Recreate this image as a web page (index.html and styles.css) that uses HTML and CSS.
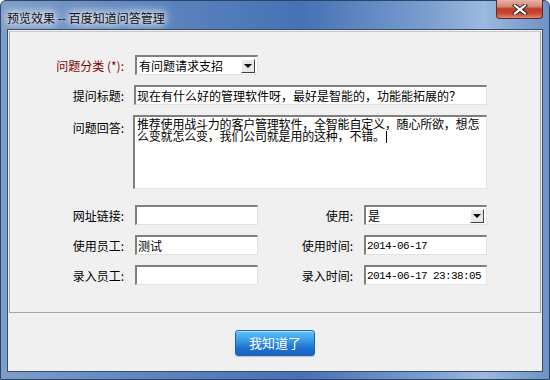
FILE: index.html
```html
<!DOCTYPE html>
<html lang="zh-CN">
<head>
  <meta charset="UTF-8">
  <title>预览效果 -- 百度知道问答管理</title>
  <link rel="stylesheet" href="styles.css">
</head>
<body>

  <div class="window">
    <!-- Barre de titre -->
    <div class="titlebar">
      <span class="title">预览效果 -- 百度知道问答管理</span>
      <div class="close">
        <svg width="16" height="11" viewBox="0 0 16 11">
          <path d="M3 1.5 L13 9.5 M13 1.5 L3 9.5" stroke="#3b2a28" stroke-width="4.2" stroke-linecap="square"/>
          <path d="M3 1.5 L13 9.5 M13 1.5 L3 9.5" stroke="#ffffff" stroke-width="2.2" stroke-linecap="square"/>
        </svg>
      </div>
    </div>

    <div class="client">
      <div class="panel">
        <div class="form">
          <label class="required">问题分类 (*):</label>
          <div class="combo">
            <span>有问题请求支招</span>
            <span class="arrow"></span>
          </div>
          <span></span><span></span>

          <label>提问标题:</label>
          <div class="field wide">现在有什么好的管理软件呀，最好是智能的，功能能拓展的？</div>

          <label class="top">问题回答:</label>
          <div class="field wide memo">推荐使用战斗力的客户管理软件，全智能自定义，随心所欲，想怎么变就怎么变，我们公司就是用的这种，不错。<span class="caret"></span></div>

          <label>网址链接:</label>
          <div class="field"></div>
          <label>使用:</label>
          <div class="combo">
            <span>是</span>
            <span class="arrow"></span>
          </div>

          <label>使用员工:</label>
          <div class="field">测试</div>
          <label>使用时间:</label>
          <div class="field mono">2014-06-17</div>

          <label>录入员工:</label>
          <div class="field"></div>
          <label>录入时间:</label>
          <div class="field mono">2014-06-17 23:38:05</div>
        </div>
      </div>

      <div class="footer">
        <button class="ok">我知道了</button>
      </div>
    </div>
  </div>

</body>
</html>
```

FILE: styles.css
```css
body {
  margin: 0;
  font-family: "Noto Sans CJK SC", "Noto Sans", sans-serif;
  font-size: 12px;
  color: #000;
}

.window {
  width: 550px;
  height: 380px;
  box-sizing: border-box;
  display: flex;
  flex-direction: column;
  border: 1px solid #2c4466;
  border-radius: 6px 6px 0 0;
  background: linear-gradient(to right, #7f9dc9 0%, #5f87c0 25%, #4672b4 55%, #7a9ed0 78%, #9cb9df 88%, #6d92c6 100%);
}

.titlebar {
  height: 28px;
  display: flex;
  align-items: flex-start;
  padding: 0 6px 0 6px;
}

.title {
  margin-top: 8px;
  font-size: 12px;
  color: #111;
  text-shadow: 0 0 6px #fff, 0 0 10px #fff, 0 0 14px #fff;
}

.close {
  margin-left: auto;
  width: 45px;
  height: 18px;
  margin-top: -1px;
  display: flex;
  align-items: center;
  justify-content: center;
  border: 1px solid #5c2b24;
  border-top: none;
  border-radius: 0 0 4px 4px;
  background: linear-gradient(to bottom, #e8b1a6 0%, #d68a7c 35%, #c03a24 50%, #c94a32 75%, #e08a70 100%);
}

.client {
  flex: 1;
  margin: 0 6px 7px 6px;
  border: 1px solid #3b4c66;
  background-color: #f0f0f0;
  display: flex;
  flex-direction: column;
}

.panel {
  height: 282px;
  box-sizing: border-box;
  margin: 1px 1px 0 1px;
  border: 1px solid #a5a5a5;
  border-top-color: #c8c8c8;
  padding-top: 23px;
}

.form {
  display: grid;
  grid-template-columns: 117px 123px 90px 123px;
  column-gap: 8px;
  row-gap: 10px;
  align-items: center;
}

label {
  text-align: right;
  white-space: nowrap;
  padding-right: 3px;
}

label.required {
  color: #800000;
}

label.top {
  align-self: start;
  margin-top: 4px;
}

.field,
.combo {
  height: 20px;
  box-sizing: border-box;
  background-color: #fff;
  border-top: 2px solid #7f7f7f;
  border-left: 2px solid #7f7f7f;
  border-right: 1px solid #e2e2e2;
  border-bottom: 1px solid #e2e2e2;
  padding-left: 1px;
  line-height: 17px;
  white-space: nowrap;
  overflow: hidden;
}

.field.wide {
  grid-column: 2 / 5;
  margin-left: -1px;
}

.field.memo {
  height: 74px;
  margin-left: -2px;
  margin-bottom: 6px;
  white-space: normal;
  line-height: 12px;
  padding: 1px 2px 0 2px;
  letter-spacing: -0.2px;
}

.field.mono {
  font-family: "Liberation Mono", "DejaVu Sans Mono", monospace;
  font-size: 11px;
  letter-spacing: -0.6px;
  line-height: 18px;
}

.caret {
  display: inline-block;
  width: 1px;
  height: 12px;
  margin-left: 1px;
  vertical-align: -2px;
  background-color: #000;
}

.combo {
  display: flex;
  align-items: center;
  justify-content: space-between;
  padding: 0 2px 0 2px;
}

.arrow {
  width: 14px;
  height: 14px;
  box-sizing: border-box;
  border: 1px solid;
  border-color: #fff #404040 #404040 #fff;
  background-color: #e8e8e8;
  display: flex;
  align-items: center;
  justify-content: center;
}

.arrow::after {
  content: "";
  border-left: 4px solid transparent;
  border-right: 4px solid transparent;
  border-top: 4px solid #000;
}

.footer {
  flex: 1;
  display: flex;
  align-items: center;
  justify-content: center;
}

.ok {
  width: 80px;
  height: 26px;
  font-family: inherit;
  font-size: 13px;
  color: #fff;
  border: 1px solid #1d64b8;
  border-radius: 3px;
  background: linear-gradient(to bottom, #5fc4f6 0%, #3a9ae6 40%, #1f72d2 70%, #1a62c0 100%);
  box-shadow: inset 0 1px 0 rgba(255, 255, 255, 0.5), 0 1px 1px rgba(0, 0, 0, 0.2);
  cursor: pointer;
  margin-top: 1px;
}
```
